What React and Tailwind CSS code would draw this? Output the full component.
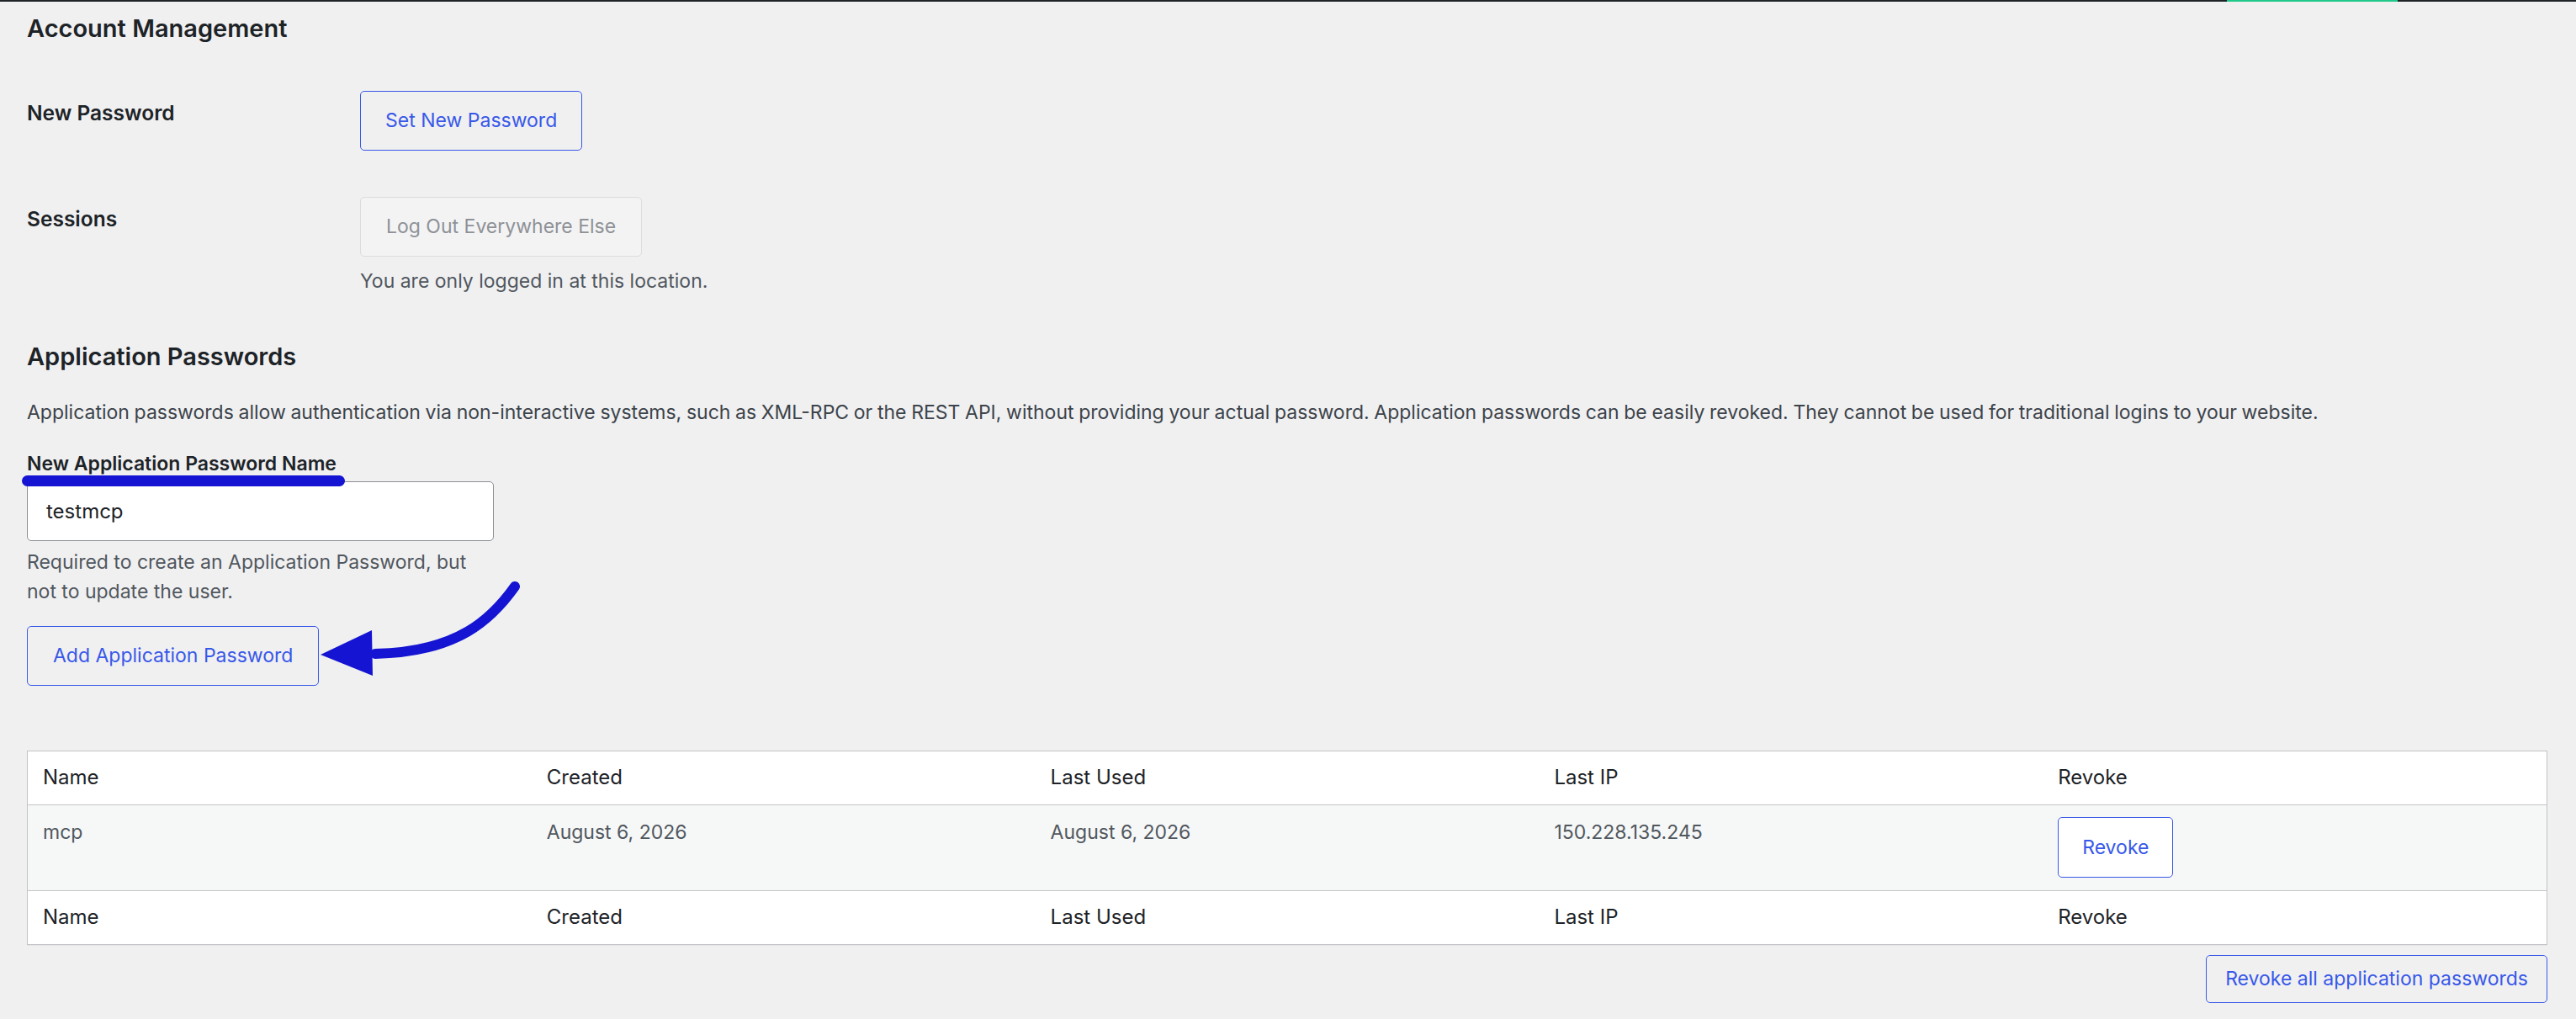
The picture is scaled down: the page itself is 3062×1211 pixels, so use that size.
import React from "react";

const cols = ["Name", "Created", "Last Used", "Last IP", "Revoke"];

function HeadRow({ last }) {
    return (
        <div className={"grid grid-cols-5 bg-white " + (last ? "" : "border-b border-[#c3c4c7]")}>
            {cols.map((c) => (
                <div key={c} className="pl-[18px] pt-[15px] pb-[16px] text-[24px] leading-[32px] text-[#1d2327]">
                    {c}
                </div>
            ))}
        </div>
    );
}

export default function App() {
    return (
        <div className="relative w-full h-[1211px] overflow-hidden bg-[#f0f0f1] font-[family-name:Inter,sans-serif] text-[#1d2327]">
            {/* top edge of the window */}
            <div className="flex h-[2px]">
                <div className="flex-1 bg-[#1d2327]" />
                <div className="w-[203px] bg-[#1fc98a]" />
                <div className="w-[212px] bg-[#1d2327]" />
            </div>

            <div className="pl-[32px] pr-[34px]">
                <h2 className="mt-[12px] text-[29px] leading-[40px] font-semibold">Account Management</h2>

                <div className="mt-[54px] flex items-start">
                    <div className="w-[396px] mt-[10px] text-[24.5px] leading-[32px] font-semibold">New Password</div>
                    <button className="h-[71px] px-[29px] rounded-[5px] border border-[#3858e9] text-[23px] text-[#3858e9]">
                        Set New Password
                    </button>
                </div>

                <div className="mt-[55px] flex items-start">
                    <div className="w-[396px] mt-[10px] text-[24.5px] leading-[32px] font-semibold">Sessions</div>
                    <div>
                        <button disabled className="h-[71px] px-[30px] rounded-[5px] border border-[#dcdcde] bg-[#f3f3f4] text-[23px] text-[#8e9196]">
                            Log Out Everywhere Else
                        </button>
                        <p className="mt-[13px] text-[23px] leading-[32px] text-[#50575e]">You are only logged in at this location.</p>
                    </div>
                </div>

                <h2 className="mt-[54px] text-[29px] leading-[40px] font-semibold">Application Passwords</h2>
                <p className="mt-[30px] text-[23px] leading-[32px] [word-spacing:-0.8px] text-[#3c434a]">
                    Application passwords allow authentication via non-interactive systems, such as XML-RPC or the REST API, without providing your actual password. Application passwords can be easily revoked. They cannot be used for traditional logins to your website.
                </p>

                <div className="mt-[29px] text-[23px] leading-[32px] font-semibold">New Application Password Name</div>
                <input
                    className="mt-[5px] block w-[555px] h-[71px] px-[22px] rounded-[5px] border border-[#8c8f94] bg-white text-[24px] text-[#1d2327] outline-none"
                    defaultValue="testmcp"
                />
                <p className="mt-[8px] text-[23px] leading-[35px] text-[#50575e]">
                    Required to create an Application Password, but
                    <br />
                    not to update the user.
                </p>
                <button className="mt-[23px] h-[71px] px-[30px] rounded-[5px] border border-[#3858e9] text-[23px] text-[#3858e9]">
                    Add Application Password
                </button>

                {/* application passwords table */}
                <div className="mt-[77px] border border-[#c3c4c7] shadow-[0_1px_1px_rgba(0,0,0,0.04)]">
                    <HeadRow />
                    <div className="grid grid-cols-5 bg-[#f6f7f7] border-b border-[#c3c4c7] text-[23px] leading-[32px] text-[#50575e]">
                        <div className="pl-[18px] pt-[16px]">mcp</div>
                        <div className="pl-[18px] pt-[16px]">August 6, 2026</div>
                        <div className="pl-[18px] pt-[16px]">August 6, 2026</div>
                        <div className="pl-[18px] pt-[16px]">150.228.135.245</div>
                        <div className="pl-[18px] pt-[14px] pb-[15px]">
                            <button className="h-[72px] px-[28px] rounded-[5px] border border-[#3858e9] bg-white text-[23px] text-[#3858e9]">
                                Revoke
                            </button>
                        </div>
                    </div>
                    <HeadRow last />
                </div>

                <div className="mt-[12px] flex justify-end">
                    <button className="h-[57px] px-[22px] rounded-[5px] border border-[#3858e9] text-[23px] text-[#3858e9]">
                        Revoke all application passwords
                    </button>
                </div>
            </div>

            {/* annotation: underline and arrow */}
            <div className="absolute left-[26px] top-[565px] w-[384px] h-[13px] rounded-full bg-[#1414d2]" />
            <svg className="absolute left-[370px] top-[680px]" width="260" height="140" viewBox="0 0 260 140">
                <path d="M242 17 C215 55 175 95 76 97" fill="none" stroke="#1414d2" strokeWidth="12" strokeLinecap="round" />
                <polygon points="11,98 72,69 73,123" fill="#1414d2" />
            </svg>
        </div>
    );
}
